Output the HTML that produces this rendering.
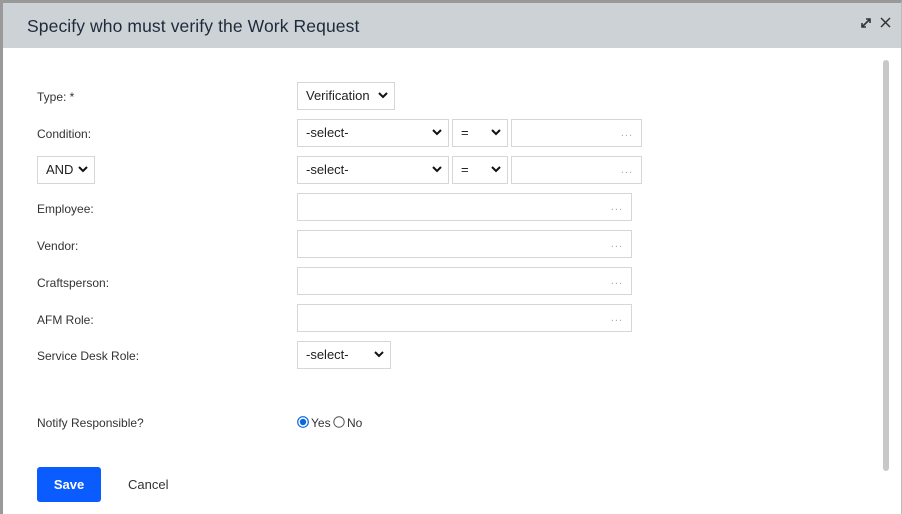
<!DOCTYPE html>
<html><head><style>
*{box-sizing:border-box;margin:0;padding:0}
body{width:902px;height:514px;overflow:hidden;background:#fff;font-family:"Liberation Sans",sans-serif;position:relative}
.frame{position:absolute;left:0;top:0;width:902px;height:514px;border-top:3px solid #999;border-left:3px solid #999;border-right:1px solid #bbb}
.hdr{position:absolute;left:3px;top:3px;width:898px;height:45px;background:#cdd2d6}
.title{position:absolute;left:27px;top:16px;font-size:17.5px;color:#1f2a3a;letter-spacing:0.1px}
.lbl{position:absolute;left:37px;font-size:12px;color:#333}
.box{position:absolute;height:28px;border:1px solid #d6d6d6;background:#fff;font-size:13px;color:#222;padding-left:8px;line-height:26px}
.chev{position:absolute;right:6px;top:9px;width:10px;height:7px}
.dots{position:absolute;right:8px;top:0px;line-height:26px;color:#aaa;font-size:11px;letter-spacing:1px}
.sb{position:absolute;left:883px;top:60px;width:6px;height:411px;background:#c8c8c8;border-radius:3px}
.btn{position:absolute;left:37px;top:467px;width:64px;height:35px;background:#0a5cff;border-radius:3px;color:#fff;font-weight:bold;font-size:13px;text-align:center;line-height:35px}
.cancel{position:absolute;left:128px;top:477px;font-size:13px;color:#333}
</style></head><body>
<div class="frame"></div>
<div class="hdr"></div>
<div class="title">Specify who must verify the Work Request</div>
<svg style="position:absolute;left:860px;top:17px" width="12" height="12" viewBox="0 0 12 12"><path d="M2 10L10 2M6 2h4v4M2 6v4h4" stroke="#333" stroke-width="1.6" fill="none"/></svg>
<svg style="position:absolute;left:880px;top:17px" width="11" height="11" viewBox="0 0 11 11"><path d="M1 1L10 10M10 1L1 10" stroke="#333" stroke-width="1.5"/></svg>
<div class="sb"></div>

<div class="lbl" style="top:90px">Type: *</div>
<div class="box" style="left:297px;top:82px;width:98px">Verification<svg class="chev" viewBox="0 0 10 7"><path d="M1 1l4 4 4-4" stroke="#111" stroke-width="2" fill="none"/></svg></div>

<div class="lbl" style="top:127px">Condition:</div>
<div class="box" style="left:297px;top:119px;width:152px">-select-<svg class="chev" viewBox="0 0 10 7"><path d="M1 1l4 4 4-4" stroke="#111" stroke-width="2" fill="none"/></svg></div>
<div class="box" style="left:452px;top:119px;width:56px">=<svg class="chev" viewBox="0 0 10 7"><path d="M1 1l4 4 4-4" stroke="#111" stroke-width="2" fill="none"/></svg></div>
<div class="box" style="left:511px;top:119px;width:131px"><span class="dots">...</span></div>

<div class="box" style="left:37px;top:156px;width:58px">AND<svg class="chev" viewBox="0 0 10 7"><path d="M1 1l4 4 4-4" stroke="#111" stroke-width="2" fill="none"/></svg></div>
<div class="box" style="left:297px;top:156px;width:152px">-select-<svg class="chev" viewBox="0 0 10 7"><path d="M1 1l4 4 4-4" stroke="#111" stroke-width="2" fill="none"/></svg></div>
<div class="box" style="left:452px;top:156px;width:56px">=<svg class="chev" viewBox="0 0 10 7"><path d="M1 1l4 4 4-4" stroke="#111" stroke-width="2" fill="none"/></svg></div>
<div class="box" style="left:511px;top:156px;width:131px"><span class="dots">...</span></div>

<div class="lbl" style="top:202px">Employee:</div>
<div class="box" style="left:297px;top:193px;width:335px"><span class="dots">...</span></div>
<div class="lbl" style="top:239px">Vendor:</div>
<div class="box" style="left:297px;top:230px;width:335px"><span class="dots">...</span></div>
<div class="lbl" style="top:276px">Craftsperson:</div>
<div class="box" style="left:297px;top:267px;width:335px"><span class="dots">...</span></div>
<div class="lbl" style="top:313px">AFM Role:</div>
<div class="box" style="left:297px;top:304px;width:335px"><span class="dots">...</span></div>

<div class="lbl" style="top:349px">Service Desk Role:</div>
<div class="box" style="left:297px;top:341px;width:94px">-select-<svg class="chev" viewBox="0 0 10 7"><path d="M1 1l4 4 4-4" stroke="#111" stroke-width="2" fill="none"/></svg></div>

<div class="lbl" style="top:416px">Notify Responsible?</div>
<svg style="position:absolute;left:297px;top:416px" width="12" height="12"><circle cx="6" cy="6" r="5.3" fill="#fff" stroke="#0a66e0" stroke-width="1.2"/><circle cx="6" cy="6" r="3.2" fill="#0a66e0"/></svg>
<div class="lbl" style="left:311px;top:416px">Yes</div>
<svg style="position:absolute;left:333px;top:416px" width="12" height="12"><circle cx="6" cy="6" r="5.2" fill="#fff" stroke="#555" stroke-width="1"/></svg>
<div class="lbl" style="left:347px;top:416px">No</div>

<div class="btn">Save</div>
<div class="cancel">Cancel</div>
</body></html>
